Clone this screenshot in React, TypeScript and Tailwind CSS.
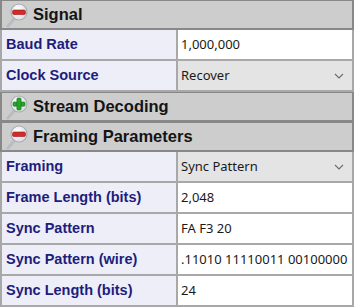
import React from "react";

type Row = { label: string; value: string; select?: boolean };
type Section = { title: string; open: boolean; rows: Row[] };

const SECTIONS: Section[] = [
  {
    title: "Signal",
    open: true,
    rows: [
      { label: "Baud Rate", value: "1,000,000" },
      { label: "Clock Source", value: "Recover", select: true },
    ],
  },
  { title: "Stream Decoding", open: false, rows: [] },
  {
    title: "Framing Parameters",
    open: true,
    rows: [
      { label: "Framing", value: "Sync Pattern", select: true },
      { label: "Frame Length (bits)", value: "2,048" },
      { label: "Sync Pattern", value: "FA F3 20" },
      { label: "Sync Pattern (wire)", value: ".11010 11110011 00100000" },
      { label: "Sync Length (bits)", value: "24" },
    ],
  },
];

function ToggleIcon({ open }: { open: boolean }) {
  return (
    <svg width="24" height="26" viewBox="0 0 24 26" className="shrink-0">
      <defs>
        <radialGradient id={open ? "lensA" : "lensB"} cx="40%" cy="35%" r="70%">
          <stop offset="0%" stopColor="#ffffff" />
          <stop offset="100%" stopColor="#d8dde2" />
        </radialGradient>
      </defs>
      {/* handle */}
      <line x1="9" y1="17" x2="3" y2="24" stroke="#b9bcc0" strokeWidth="3" strokeLinecap="round" />
      <circle cx="14" cy="10" r="8" fill={`url(#${open ? "lensA" : "lensB"})`} stroke="#a8adb3" strokeWidth="1.2" />
      {open ? (
        <rect x="7.5" y="8" width="13" height="4.5" rx="1.5" fill="#d42a2a" stroke="#9e1414" strokeWidth="0.6" />
      ) : (
        <g fill="#2aa32a" stroke="#16761a" strokeWidth="0.6">
          <rect x="8" y="8" width="12" height="4.2" rx="1" />
          <rect x="11.9" y="4" width="4.2" height="12" rx="1" />
        </g>
      )}
    </svg>
  );
}

function Chevron() {
  return (
    <svg width="10" height="6" viewBox="0 0 10 6" className="ml-auto mr-[8px]">
      <polyline points="1,1 5,5 9,1" fill="none" stroke="#6b6b6b" strokeWidth="1.1" />
    </svg>
  );
}

export default function App() {
  return (
    <div className="w-[361px] h-[308px] bg-white overflow-hidden">
      <div className="w-[354px]">
        {SECTIONS.map((s) => (
          <div key={s.title}>
            <div className="h-[30px] flex items-center gap-[4px] pl-[3px] bg-[#cdcdcd] border-x-2 border-t border-b-2 border-[#888888]">
              <ToggleIcon open={s.open} />
              <span className="font-['Liberation_Sans',Arial,sans-serif] font-bold text-[16.5px] text-[#141414]">
                {s.title}
              </span>
            </div>
            {s.open &&
              s.rows.map((r) => (
                <div
                  key={r.label}
                  className="grid grid-cols-[174px_174px] gap-x-[2px] px-[2px] pb-[2px] bg-[#a8a8a8]"
                >
                  <div className="h-[29px] flex items-center pl-[4px] bg-[#eeeef9] font-['Liberation_Sans',Arial,sans-serif] font-bold text-[14.5px] text-[#1d1d7c]">
                    {r.label}
                  </div>
                  <div
                    className={`h-[29px] flex items-center pl-[3px] overflow-hidden whitespace-nowrap font-['Noto_Sans',sans-serif] text-[13px] text-[#1a1a1a] ${
                      r.select ? "bg-[#e4e4e4]" : "bg-white"
                    }`}
                  >
                    <span>{r.value}</span>
                    {r.select && <Chevron />}
                  </div>
                </div>
              ))}
          </div>
        ))}
      </div>
    </div>
  );
}
